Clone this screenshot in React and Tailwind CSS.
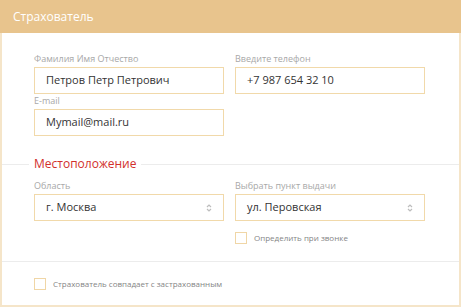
import { useState } from "react";

function Arrows() {
  return (
    <svg width="6" height="10" viewBox="0 0 6 10" fill="none" stroke="#bdbdbd" strokeWidth="1.2">
      <path d="M1 4 L3 2 L5 4" />
      <path d="M1 6 L3 8 L5 6" />
    </svg>
  );
}

function Field({ label, value, select, className = "" }) {
  return (
    <div className={className}>
      <div className="text-[9px] leading-[12px] h-[12px] mb-[2px] text-[#a8a8a8]">{label}</div>
      <div className="h-[27px] border border-[#f1d9aa] pl-[11px] pr-[11px] flex items-center justify-between text-[11px] text-[#333]">
        <span>{value}</span>
        {select && <Arrows />}
      </div>
    </div>
  );
}

function Check({ label, checked, onClick }) {
  return (
    <button onClick={onClick} className="flex items-center gap-[7px] text-left">
      <span className="w-[12px] h-[12px] border border-[#f0d6a6] bg-white flex items-center justify-center text-[9px] text-[#e0b873]">
        {checked ? "✓" : ""}
      </span>
      <span className="text-[8px] text-[#858585]">{label}</span>
    </button>
  );
}

export default function App() {
  const [byCall, setByCall] = useState(false);
  const [same, setSame] = useState(false);

  return (
    <div className="w-[461px] h-[307px] bg-white font-['Open_Sans',sans-serif] overflow-hidden">
      {/* Header */}
      <div className="h-[33px] bg-[#e8c48d] text-white text-[12px] pl-[13px] flex items-center">
        Страхователь
      </div>

      <div className="h-[274px] border-x-2 border-b-2 border-[#f5e5c9] flex flex-col">
        <div className="pt-[20px] px-[32px]">
          <div className="grid grid-cols-[190px_190px] gap-x-[11px]">
            <Field label="Фамилия Имя Отчество" value="Петров Петр Петрович" />
            <Field label="Введите телефон" value="+7 987 654 32 10" />
          </div>
          <div className="grid grid-cols-[190px_190px] gap-x-[11px] mt-[1px]">
            <Field label="E-mail" value="Mymail@mail.ru" />
          </div>
        </div>

        {/* Location divider */}
        <div className="mt-[21px] h-[14px] flex items-center">
          <div className="w-[27px] h-px bg-[#ececec]" />
          <div className="px-[5px] text-[12px] leading-[14px] text-[#d2302c]">Местоположение</div>
          <div className="flex-1 h-px bg-[#ececec]" />
        </div>

        <div className="px-[32px] mt-[9px]">
          <div className="grid grid-cols-[190px_190px] gap-x-[11px]">
            <Field label="Область" value="г. Москва" select />
            <div>
              <Field label="Выбрать пункт выдачи" value="ул. Перовская" select />
              <div className="mt-[11px]">
                <Check label="Определить при звонке" checked={byCall} onClick={() => setByCall(!byCall)} />
              </div>
            </div>
          </div>
        </div>

        <div className="mt-[17px] h-px bg-[#ececec]" />

        <div className="px-[32px] mt-[16px]">
          <Check label="Страхователь совпадает с застрахованным" checked={same} onClick={() => setSame(!same)} />
        </div>
      </div>
    </div>
  );
}
